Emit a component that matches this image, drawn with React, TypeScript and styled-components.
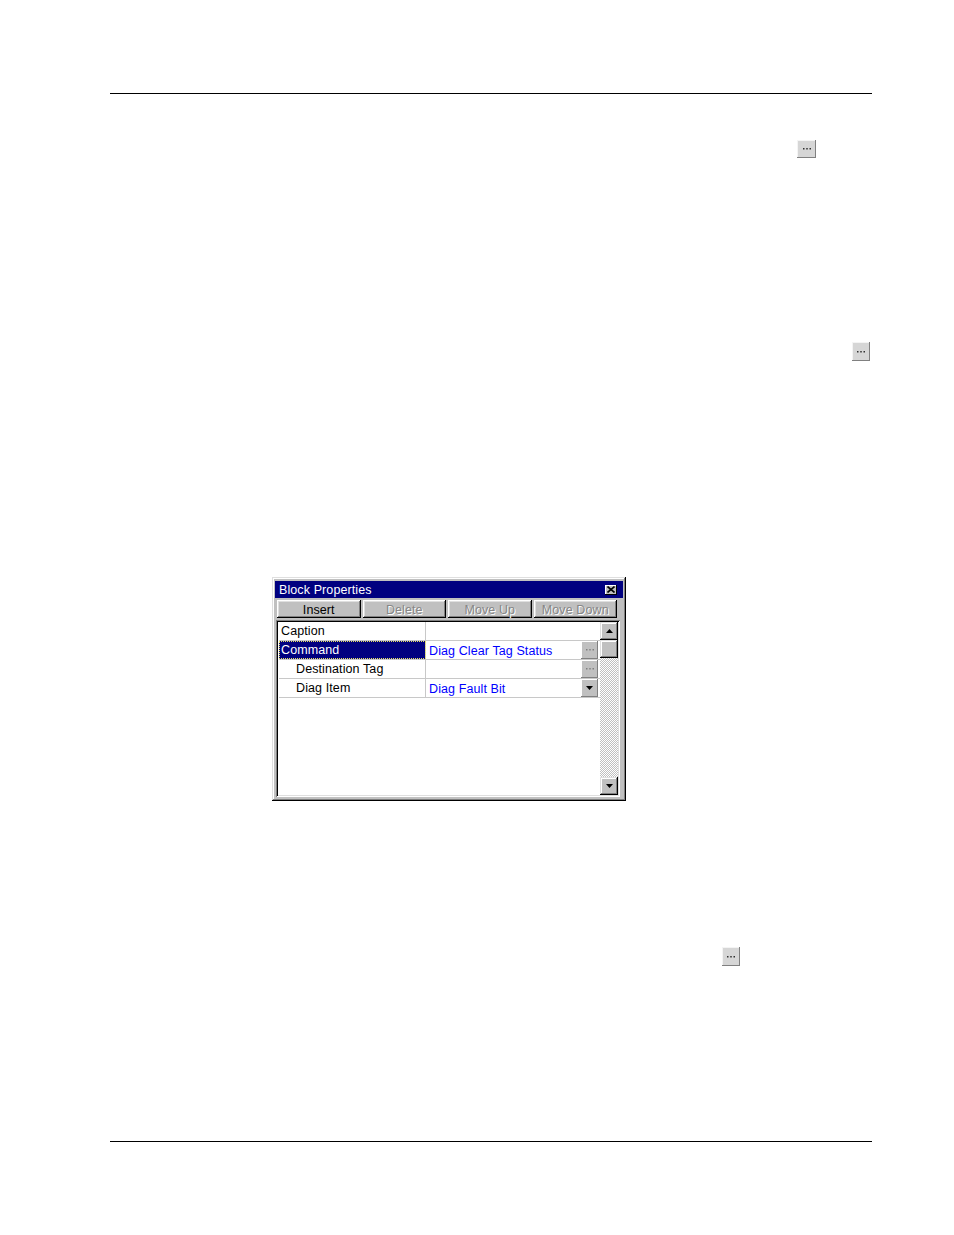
import React from "react";
import styled, { createGlobalStyle } from "styled-components";

const GlobalStyle = createGlobalStyle`
  html, body { margin: 0; padding: 0; background: #ffffff; }
  body { font-family: "Liberation Sans", Arial, sans-serif; }
`;

const Page = styled.div`
  width: 954px;
  height: 1235px;
  display: flex;
  flex-direction: column;
  padding-top: 93px;
  box-sizing: border-box;
`;

const Rule = styled.div<{ $top?: number }>`
  margin-top: ${(p) => p.$top ?? 0}px;
  margin-left: 110px;
  width: 762px;
  height: 1px;
  background: #000;
  flex: none;
`;

const Line = styled.div<{ $top: number; $left: number }>`
  margin-top: ${(p) => p.$top}px;
  padding-left: ${(p) => p.$left}px;
  display: flex;
  flex: none;
`;

const DocButton = styled.div<{ $w: number; $h: number }>`
  width: ${(p) => p.$w}px;
  height: ${(p) => p.$h}px;
  background: #d6d6d6;
  box-shadow: inset -1px -1px #808080, inset 1px 1px #f4f4f4;
  display: flex;
  align-items: center;
  justify-content: center;
  box-sizing: border-box;
`;

const Dots = ({ color = "#303030" }: { color?: string }) => (
  <svg width="8" height="2" viewBox="0 0 8 2">
    <rect x="0" y="0" width="1.5" height="1.5" fill={color} />
    <rect x="3.25" y="0" width="1.5" height="1.5" fill={color} />
    <rect x="6.5" y="0" width="1.5" height="1.5" fill={color} />
  </svg>
);

/* ---------- Window ---------- */

const Window = styled.div`
  width: 354px;
  height: 224px;
  box-sizing: border-box;
  background: #c0c0c0;
  padding: 4px 3px 3px 3px;
  box-shadow: inset -1px -1px #000, inset 1px 1px #dfdfdf,
    inset -2px -2px #808080, inset 2px 2px #fff;
  display: flex;
  flex-direction: column;
  font-size: 12.5px;
  letter-spacing: 0.1px;
  font-family: "Liberation Sans", Arial, sans-serif;
`;

const TitleBar = styled.div`
  height: 17px;
  background: #000080;
  color: #fff;
  display: flex;
  align-items: center;
  justify-content: space-between;
  padding: 0 6px 0 4px;
  flex: none;
`;

const TitleText = styled.span`
  line-height: 17px;
  padding-top: 2px;
`;

const CloseBtn = styled.div`
  width: 12px;
  height: 10px;
  background: #c0c0c0;
  box-shadow: inset -1px -1px #000, inset 1px 1px #fff;
  display: flex;
  align-items: center;
  justify-content: center;
`;

const Toolbar = styled.div`
  display: flex;
  gap: 2px;
  margin-top: 2px;
  padding: 0 6px 0 2px;
  height: 18px;
  flex: none;
`;

const ToolButton = styled.div<{ $disabled?: boolean }>`
  flex: 1;
  height: 18px;
  box-sizing: border-box;
  padding-top: 1px;
  background: #c0c0c0;
  box-shadow: inset -1px -1px #000, inset 1px 1px #fff,
    inset -2px -2px #808080, inset 2px 2px #dfdfdf;
  display: flex;
  align-items: center;
  justify-content: center;
  color: ${(p) => (p.$disabled ? "#868686" : "#000")};
  text-shadow: ${(p) => (p.$disabled ? "1px 1px #fff" : "none")};
`;

const Grid = styled.div`
  margin: 2px 3px 0 1px;
  height: 177px;
  box-sizing: border-box;
  padding: 2px;
  background: #fff;
  box-shadow: inset 1px 1px #808080, inset -1px -1px #fff,
    inset 2px 2px #000, inset -2px -2px #dfdfdf;
  display: flex;
  flex: none;
`;

const List = styled.div`
  flex: 1;
  display: flex;
  flex-direction: column;
`;

const Row = styled.div`
  display: flex;
  height: 19px;
  box-sizing: border-box;
  border-bottom: 1px solid #c8c8c8;
  margin-left: 1px;
`;

const Label = styled.div<{ $indent?: boolean; $selected?: boolean }>`
  width: 147px;
  box-sizing: border-box;
  padding-left: ${(p) => (p.$indent ? 17 : 2)}px;
  display: flex;
  align-items: center;
  color: ${(p) => (p.$selected ? "#fff" : "#000")};
  background: ${(p) => (p.$selected ? "#000080" : "transparent")};
  outline: ${(p) => (p.$selected ? "1px dotted #e8e060" : "none")};
  outline-offset: -1px;
  border-right: 1px solid #c8c8c8;
  white-space: nowrap;
`;

const Value = styled.div`
  flex: 1;
  display: flex;
  align-items: center;
  padding-left: 3px;
  padding-top: 1px;
  color: #0000ff;
  white-space: nowrap;
`;

const CellButton = styled.div`
  width: 17px;
  height: 18px;
  box-sizing: border-box;
  background: #c0c0c0;
  box-shadow: inset -1px -1px #808080, inset 1px 1px #fff;
  display: flex;
  align-items: center;
  justify-content: center;
  margin-right: 2px;
`;

const ScrollBar = styled.div`
  width: 18px;
  display: flex;
  flex-direction: column;
  background: repeating-conic-gradient(#c0c0c0 0% 25%, #ffffff 0% 50%) 0 0 / 2px 2px;
`;

const ScrollButton = styled.div`
  width: 18px;
  height: 18px;
  box-sizing: border-box;
  background: #c0c0c0;
  box-shadow: inset -1px -1px #000, inset 1px 1px #dfdfdf,
    inset -2px -2px #808080, inset 2px 2px #fff;
  display: flex;
  align-items: center;
  justify-content: center;
  flex: none;
`;

const Track = styled.div`
  flex: 1;
`;

const Arrow = ({ up }: { up?: boolean }) => (
  <svg width="7" height="4" viewBox="0 0 7 4">
    <polygon points={up ? "3.5,0 7,4 0,4" : "0,0 7,0 3.5,4"} fill="#000" />
  </svg>
);

const CloseX = () => (
  <svg width="8" height="7" viewBox="0 0 8 7">
    <path d="M0.5 0.5 L7.5 6.5 M7.5 0.5 L0.5 6.5" stroke="#000" strokeWidth="1.6" />
  </svg>
);

export default function App() {
  return (
    <>
      <GlobalStyle />
      <Page>
        <Rule />
        <Line $top={46} $left={797}>
          <DocButton $w={19} $h={18}>
            <Dots />
          </DocButton>
        </Line>
        <Line $top={184} $left={852}>
          <DocButton $w={18} $h={19}>
            <Dots />
          </DocButton>
        </Line>
        <Line $top={216} $left={272}>
          <Window>
            <TitleBar>
              <TitleText>Block Properties</TitleText>
              <CloseBtn>
                <CloseX />
              </CloseBtn>
            </TitleBar>
            <Toolbar>
              <ToolButton>Insert</ToolButton>
              <ToolButton $disabled>Delete</ToolButton>
              <ToolButton $disabled>Move Up</ToolButton>
              <ToolButton $disabled>Move Down</ToolButton>
            </Toolbar>
            <Grid>
              <List>
                <Row>
                  <Label>Caption</Label>
                  <Value />
                </Row>
                <Row>
                  <Label $selected>Command</Label>
                  <Value>Diag Clear Tag Status</Value>
                  <CellButton>
                    <Dots color="#808080" />
                  </CellButton>
                </Row>
                <Row>
                  <Label $indent>Destination Tag</Label>
                  <Value />
                  <CellButton>
                    <Dots color="#808080" />
                  </CellButton>
                </Row>
                <Row>
                  <Label $indent>Diag Item</Label>
                  <Value>Diag Fault Bit</Value>
                  <CellButton>
                    <Arrow />
                  </CellButton>
                </Row>
              </List>
              <ScrollBar>
                <ScrollButton>
                  <Arrow up />
                </ScrollButton>
                <ScrollButton />
                <Track />
                <ScrollButton>
                  <Arrow />
                </ScrollButton>
              </ScrollBar>
            </Grid>
          </Window>
        </Line>
        <Line $top={146} $left={722}>
          <DocButton $w={18} $h={19}>
            <Dots />
          </DocButton>
        </Line>
        <Rule $top={175} />
      </Page>
    </>
  );
}
